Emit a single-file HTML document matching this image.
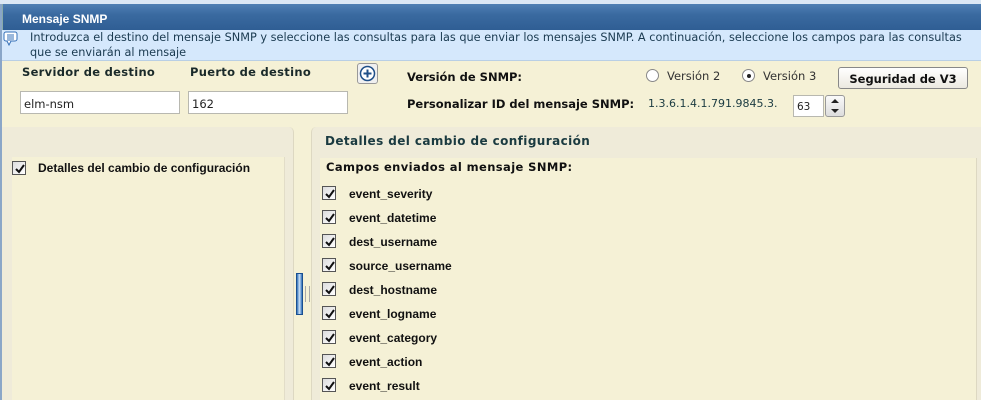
<!DOCTYPE html>
<html><head><meta charset="utf-8"><style>
*{box-sizing:border-box;margin:0;padding:0}
body{width:981px;height:400px;overflow:hidden;background:#f5f1d6;font-family:Verdana,"DejaVu Sans",sans-serif;position:relative;font-size:11px}
.a{position:absolute}
.top{left:0;top:0;width:981px;height:4px;background:#dce8f5}
.title{left:2px;top:4px;width:979px;height:26px;background:linear-gradient(#5080b4,#3a6aa0 40%,#2f5e94);color:#fff;font:bold 12px "Liberation Sans",Arial,sans-serif;padding:8px 0 0 19px;border-left:1px solid #8aa}
.info{left:2px;top:30px;width:979px;height:31px;background:#d5e8fc;color:#1a3a50;font-size:11.3px;line-height:15px;padding:0 0 0 28px;border-bottom:1px solid #b9cfe5;font-family:"DejaVu Sans",sans-serif}
.lbl{font:bold 11.5px "DejaVu Sans",sans-serif;color:#1a2a2a;letter-spacing:.3px}
.inp{background:#fff;border:1px solid #b8b8b0;height:23px;font-size:11.5px;padding:5px 0 0 3px;color:#222;font-family:"DejaVu Sans",sans-serif}
.b{font:bold 11.5px "DejaVu Sans",sans-serif;color:#111}
.cb{width:14px;height:14px;border:1px solid #555;background:linear-gradient(135deg,#ddd,#fff)}
.cb svg{position:absolute;left:1px;top:1px}
.fld{font:bold 12px "Liberation Sans",Arial,sans-serif;color:#111}
.radio{width:13px;height:13px;border-radius:50%;border:1px solid #888;background:#fff}
</style></head><body>
<div class="a top"></div>
<div class="a" style="left:0;top:4px;width:2px;height:396px;background:#8aa6c8"></div>
<div class="a title">Mensaje SNMP</div>
<div class="a info">Introduzca el destino del mensaje SNMP y seleccione las consultas para las que enviar los mensajes SNMP. A continuación, seleccione los campos para las consultas<br>que se enviarán al mensaje</div>
<svg class="a" style="left:3px;top:31px" width="16" height="15"><rect x="1" y="1" width="13" height="9" rx="2" fill="#fff" stroke="#3570b8"/><path d="M4 10 L6 14 L8 10" fill="#fff" stroke="#3570b8"/><path d="M4 4h7M4 6h7M4 8h7" stroke="#3570b8"/></svg>

<div class="a lbl" style="left:22px;top:65px">Servidor de destino</div>
<div class="a lbl" style="left:190px;top:65px">Puerto de destino</div>
<div class="a inp" style="left:20px;top:91px;width:160px">elm-nsm</div>
<div class="a inp" style="left:188px;top:91px;width:160px">162</div>
<div class="a" style="left:357px;top:63px;width:21px;height:21px;border:1px solid #999;border-radius:3px;background:#f0f0f0"></div>
<svg class="a" style="left:359px;top:65px" width="17" height="17"><circle cx="8.5" cy="8.5" r="7" fill="#fff" stroke="#1f4f88" stroke-width="1.5"/><path d="M8.5 4.5v8M4.5 8.5h8" stroke="#1f4f88" stroke-width="2"/></svg>
<div class="a b" style="left:407px;top:70px">Versión de SNMP:</div>
<div class="a b" style="left:407px;top:97px">Personalizar ID del mensaje SNMP:</div>
<div class="a radio" style="left:646px;top:69px"></div>
<div class="a" style="left:667px;top:69px;color:#333;font-size:11.5px">Versión 2</div>
<div class="a radio" style="left:742px;top:69px"></div>
<div class="a" style="left:747px;top:74px;width:4px;height:4px;border-radius:50%;background:#222"></div>
<div class="a" style="left:763px;top:69px;color:#333;font-size:11.5px">Versión 3</div>
<div class="a b" style="left:838px;top:67px;width:130px;height:22px;border:1px solid #888;border-radius:3px;background:linear-gradient(#fff,#ece9e0);text-align:center;padding-top:4px;font-size:11.5px">Seguridad de V3</div>
<div class="a" style="left:648px;top:97px;color:#1a3a40;font-size:11px">1.3.6.1.4.1.791.9845.3.</div>
<div class="a inp" style="left:793px;top:95px;width:31px;height:22px;font-size:10.5px">63</div>
<div class="a" style="left:825px;top:95px;width:20px;height:22px;border:1px solid #999;border-radius:3px;background:linear-gradient(#fafafa,#ddd)"></div>
<div class="a" style="left:831px;top:99px;border:4px solid transparent;border-bottom:4px solid #222;border-top:0"></div>
<div class="a" style="left:831px;top:109px;border:4px solid transparent;border-top:4px solid #222;border-bottom:0"></div>

<div class="a" style="left:2px;top:127px;width:292px;height:273px;background:#efebd9;border-right:1px solid #ddd8c2;border-radius:0 5px 0 0"></div>
<div class="a" style="left:12px;top:157px;width:273px;height:243px;background:#f5f1d6;border-right:1px solid #e2ddc8"></div>
<div class="a cb" style="left:12px;top:161px"><svg width="12" height="12"><path d="M2 6 L5 9 L10 2" fill="none" stroke="#111" stroke-width="2"/></svg></div>
<div class="a fld" style="left:38px;top:161px">Detalles del cambio de configuración</div>

<div class="a" style="left:296px;top:273px;width:7px;height:42px;background:linear-gradient(90deg,#2e6fb8,#cfe3f8 50%,#2e6fb8);border:1px solid #1a4f90"></div>
<div class="a" style="left:305px;top:286px;width:5px;height:16px;border-left:1px solid #aaa;border-right:1px solid #aaa"></div>

<div class="a" style="left:311px;top:127px;width:670px;height:273px;background:#efebd9;border-radius:5px 0 0 0;border-left:1px solid #ddd8c2"></div>
<div class="a" style="left:325px;top:134px;font:bold 12px 'DejaVu Sans',sans-serif;color:#1a3a40;letter-spacing:.4px">Detalles del cambio de configuración</div>
<div class="a" style="left:320px;top:158px;width:657px;height:242px;background:#f5f1d6;border-right:1px solid #ddd8c2"></div>
<div class="a b" style="left:326px;top:160px;font-size:11.5px;letter-spacing:.4px">Campos enviados al mensaje SNMP:</div>

<div class="a cb" style="left:322px;top:186px"><svg width="12" height="12"><path d="M2 6 L5 9 L10 2" fill="none" stroke="#111" stroke-width="2"/></svg></div><div class="a fld" style="left:349px;top:187px">event_severity</div>
<div class="a cb" style="left:322px;top:210px"><svg width="12" height="12"><path d="M2 6 L5 9 L10 2" fill="none" stroke="#111" stroke-width="2"/></svg></div><div class="a fld" style="left:349px;top:211px">event_datetime</div>
<div class="a cb" style="left:322px;top:234px"><svg width="12" height="12"><path d="M2 6 L5 9 L10 2" fill="none" stroke="#111" stroke-width="2"/></svg></div><div class="a fld" style="left:349px;top:235px">dest_username</div>
<div class="a cb" style="left:322px;top:258px"><svg width="12" height="12"><path d="M2 6 L5 9 L10 2" fill="none" stroke="#111" stroke-width="2"/></svg></div><div class="a fld" style="left:349px;top:259px">source_username</div>
<div class="a cb" style="left:322px;top:282px"><svg width="12" height="12"><path d="M2 6 L5 9 L10 2" fill="none" stroke="#111" stroke-width="2"/></svg></div><div class="a fld" style="left:349px;top:283px">dest_hostname</div>
<div class="a cb" style="left:322px;top:306px"><svg width="12" height="12"><path d="M2 6 L5 9 L10 2" fill="none" stroke="#111" stroke-width="2"/></svg></div><div class="a fld" style="left:349px;top:307px">event_logname</div>
<div class="a cb" style="left:322px;top:330px"><svg width="12" height="12"><path d="M2 6 L5 9 L10 2" fill="none" stroke="#111" stroke-width="2"/></svg></div><div class="a fld" style="left:349px;top:331px">event_category</div>
<div class="a cb" style="left:322px;top:354px"><svg width="12" height="12"><path d="M2 6 L5 9 L10 2" fill="none" stroke="#111" stroke-width="2"/></svg></div><div class="a fld" style="left:349px;top:355px">event_action</div>
<div class="a cb" style="left:322px;top:378px"><svg width="12" height="12"><path d="M2 6 L5 9 L10 2" fill="none" stroke="#111" stroke-width="2"/></svg></div><div class="a fld" style="left:349px;top:379px">event_result</div>
</body></html>
